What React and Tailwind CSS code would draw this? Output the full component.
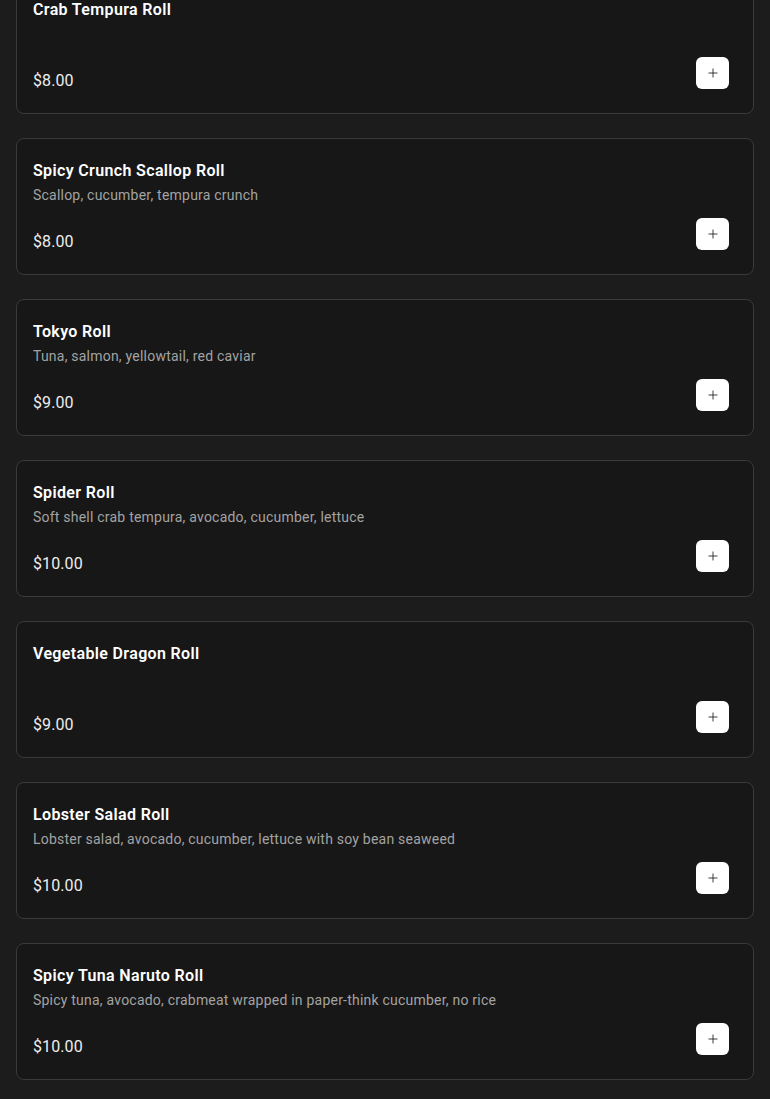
import React from "react";
import { Plus } from "lucide-react";

const items = [
  { name: "Crab Tempura Roll", desc: "", price: "$8.00" },
  { name: "Spicy Crunch Scallop Roll", desc: "Scallop, cucumber, tempura crunch", price: "$8.00" },
  { name: "Tokyo Roll", desc: "Tuna, salmon, yellowtail, red caviar", price: "$9.00" },
  { name: "Spider Roll", desc: "Soft shell crab tempura, avocado, cucumber, lettuce", price: "$10.00" },
  { name: "Vegetable Dragon Roll", desc: "", price: "$9.00" },
  { name: "Lobster Salad Roll", desc: "Lobster salad, avocado, cucumber, lettuce with soy bean seaweed", price: "$10.00" },
  { name: "Spicy Tuna Naruto Roll", desc: "Spicy tuna, avocado, crabmeat wrapped in paper-think cucumber, no rice", price: "$10.00" },
];

export default function App() {
  return (
    <div className="min-h-[1099px] bg-[#1c1c1c] px-4 pb-5" style={{ fontFamily: "Roboto, 'Liberation Sans', sans-serif" }}>
      <div className="-mt-[23px] flex flex-col gap-6">
        {items.map((it) => (
          <div key={it.name} className="flex items-end rounded-lg border border-[#3a3a3a] bg-[#171717] pl-4 pr-4 pt-5 pb-5">
            <div className="flex-1 flex flex-col">
              <div className="text-base leading-6 font-semibold tracking-[0.35px] text-white">{it.name}</div>
              <div className="mt-[2px] min-h-5 text-sm leading-5 tracking-[0.22px] text-[#a3a3a3]">{it.desc}</div>
              <div className="mt-[25px] text-base leading-6 tracking-[0.1px] text-[#ededed]">{it.price}</div>
            </div>
            <button className="mb-[4px] mr-2 flex h-8 w-[33px] items-center justify-center rounded-md bg-white text-[#222]">
              <Plus size={14} strokeWidth={1.5} />
            </button>
          </div>
        ))}
      </div>
    </div>
  );
}
